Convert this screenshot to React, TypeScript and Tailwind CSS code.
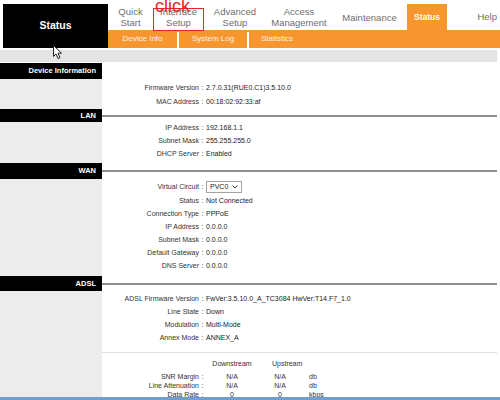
import React from 'react';

const orange = 'bg-[#f7962f]';

function MenuItem({ lines, w }: { lines: string[]; w: string }) {
  return (
    <div className={`${w} flex flex-col items-center justify-center text-[9.5px] leading-[11px] text-[#6e6e6e]`}>
      {lines.map((l) => (
        <span key={l}>{l}</span>
      ))}
    </div>
  );
}

function SectionHead({ title, line = true, h }: { title: string; line?: boolean; h: string }) {
  return (
    <div className={`flex ${h}`}>
      <div className="w-[102px] bg-black text-white font-bold text-[7.5px] flex items-center justify-end pr-[6px]">
        {title}
      </div>
      <div className="flex-1 flex items-center pr-[3px]">
        {line && <div className="w-full h-[2px] bg-[#8e8e8e]" />}
      </div>
    </div>
  );
}

function Gap({ h }: { h: string }) {
  return (
    <div className={`flex ${h}`}>
      <div className="w-[102px] bg-[#ececec]" />
    </div>
  );
}

function Row({ label, value, h = 'h-[13px]' }: { label: string; value: React.ReactNode; h?: string }) {
  return (
    <div className={`flex ${h}`}>
      <div className="w-[102px] bg-[#ececec]" />
      <div className="flex items-center text-[7px] text-[#333]">
        <span className="w-[97px] text-right">{label}</span>
        <span className="w-[7px] text-center">:</span>
        <span className="text-[#222]">{value}</span>
      </div>
    </div>
  );
}

function Stat({ label, down, up, unit }: { label: string; down: string; up: string; unit: string }) {
  return (
    <div className="flex h-[9px]">
      <div className="w-[102px] bg-[#ececec]" />
      <div className="flex items-center text-[7px] leading-[9px] text-[#333]">
        <span className="w-[97px] text-right">{label}</span>
        <span className="w-[7px] text-center">:</span>
        <span className="w-[52px] text-center">{down}</span>
        <span className="w-[44px] text-center">{up}</span>
        <span className="ml-[7px]">{unit}</span>
      </div>
    </div>
  );
}

export default function App() {
  return (
    <div
      className="relative w-[500px] h-[400px] overflow-hidden bg-white"
      style={{ fontFamily: '"Liberation Sans", Arial, sans-serif' }}
    >
      {/* top navigation */}
      <div className="flex pt-[4px]">
        <div className="ml-[3px] w-[105px] h-[44px] bg-black text-white font-bold text-[10.5px] flex items-center justify-center">
          Status
        </div>
        <div className="flex-1 flex flex-col">
          <div className="h-[26px] flex">
            <MenuItem lines={['Quick', 'Start']} w="w-[45px]" />
            <MenuItem lines={['Interface', 'Setup']} w="w-[51px]" />
            <MenuItem lines={['Advanced', 'Setup']} w="w-[62px]" />
            <MenuItem lines={['Access', 'Management']} w="w-[66px]" />
            <MenuItem lines={['Maintenance']} w="w-[75px]" />
            <div className={`w-[40px] ${orange} flex items-center justify-center text-white font-bold text-[8.5px]`}>
              Status
            </div>
            <div className="flex-1 flex items-center justify-end pr-[3px] text-[9.5px] text-[#6e6e6e]">Help</div>
          </div>
          <div className={`h-[18px] ${orange} flex text-[8px] text-[#fff3e2]`}>
            <div className="w-[69px] flex items-center justify-center">Device Info</div>
            <div className="w-[2px] h-[16px] self-end bg-white" />
            <div className="w-[68px] flex items-center justify-center">System Log</div>
            <div className="w-[2px] h-[16px] self-end bg-white" />
            <div className="w-[56px] flex items-center justify-center">Statistics</div>
          </div>
        </div>
      </div>

      <div className="mt-[2px] h-[12px] w-[497px] bg-[#e4e4e4]" />

      {/* body */}
      <div className="flex flex-col pt-[1px]">
        <SectionHead title="Device Information" line={false} h="h-[16px]" />
        <Gap h="h-[2px]" />
        <Row label="Firmware Version" value="2.7.0.31(RUE0.C1)3.5.10.0" h="h-[14px]" />
        <Row label="MAC Address" value="00:18:02:92:33:af" h="h-[14px]" />

        <SectionHead title="LAN" h="h-[13px]" />
        <Row label="IP Address" value="192.168.1.1" />
        <Row label="Subnet Mask" value="255.255.255.0" />
        <Row label="DHCP Server" value="Enabled" />
        <Gap h="h-[2px]" />

        <SectionHead title="WAN" h="h-[16px]" />
        <Row
          label="Virtual Circuit"
          h="h-[16px]"
          value={
            <span className="flex items-center h-[12px] w-[36px] border border-[#a5a5a5] px-[3px] justify-between">
              <span>PVC0</span>
              <svg width="6" height="4" viewBox="0 0 6 4">
                <path d="M0.5 0.5 L3 3 L5.5 0.5" fill="none" stroke="#333" strokeWidth="1" />
              </svg>
            </span>
          }
        />
        <Row label="Status" value="Not Connected" />
        <Row label="Connection Type" value="PPPoE" />
        <Row label="IP Address" value="0.0.0.0" />
        <Row label="Subnet Mask" value="0.0.0.0" />
        <Row label="Default Gateway" value="0.0.0.0" />
        <Row label="DNS Server" value="0.0.0.0" />
        <Gap h="h-[3px]" />

        <SectionHead title="ADSL" h="h-[15px]" />
        <Gap h="h-[2px]" />
        <Row label="ADSL Firmware Version" value="FwVer:3.5.10.0_A_TC3084 HwVer:T14.F7_1.0" />
        <Row label="Line State" value="Down" />
        <Row label="Modulation" value="Multi-Mode" />
        <Row label="Annex Mode" value="ANNEX_A" />
        <Gap h="h-[7px]" />
        <div className="flex h-[1px]">
          <div className="w-[102px] bg-[#ececec]" />
          <div className="flex-1 mr-[3px] bg-[#dedede]" />
        </div>
        <Gap h="h-[5px]" />
        <div className="flex h-[12px]">
          <div className="w-[102px] bg-[#ececec]" />
          <div className="flex items-center text-[7px] text-[#333]">
            <span className="w-[104px]" />
            <span className="w-[52px] text-center">Downstream</span>
            <span className="pl-[14px]">Upstream</span>
          </div>
        </div>
        <Gap h="h-[2px]" />
        <Stat label="SNR Margin" down="N/A" up="N/A" unit="db" />
        <Stat label="Line Attenuation" down="N/A" up="N/A" unit="db" />
        <Stat label="Data Rate" down="0" up="0" unit="kbps" />
      </div>

      {/* taskbar edge */}
      <div className="absolute left-0 right-0 bottom-0 h-[3px] bg-[#6f9fd2]" />

      {/* annotation */}
      <div className="absolute left-[153px] top-[8px] w-[51px] h-[23px] border border-[#e8262a]" />
      <div className="absolute left-[155px] top-[-3px] text-[18px] leading-[18px] text-[#e8262a]">click</div>

      {/* mouse cursor */}
      <svg className="absolute left-[53px] top-[45px]" width="10" height="15" viewBox="0 0 10 15">
        <path d="M0.5 0.5 L0.5 11.5 L3 9 L5 13.5 L7 12.6 L5 8.2 L8.5 8.2 Z" fill="white" stroke="#222" strokeWidth="1" />
      </svg>
    </div>
  );
}
